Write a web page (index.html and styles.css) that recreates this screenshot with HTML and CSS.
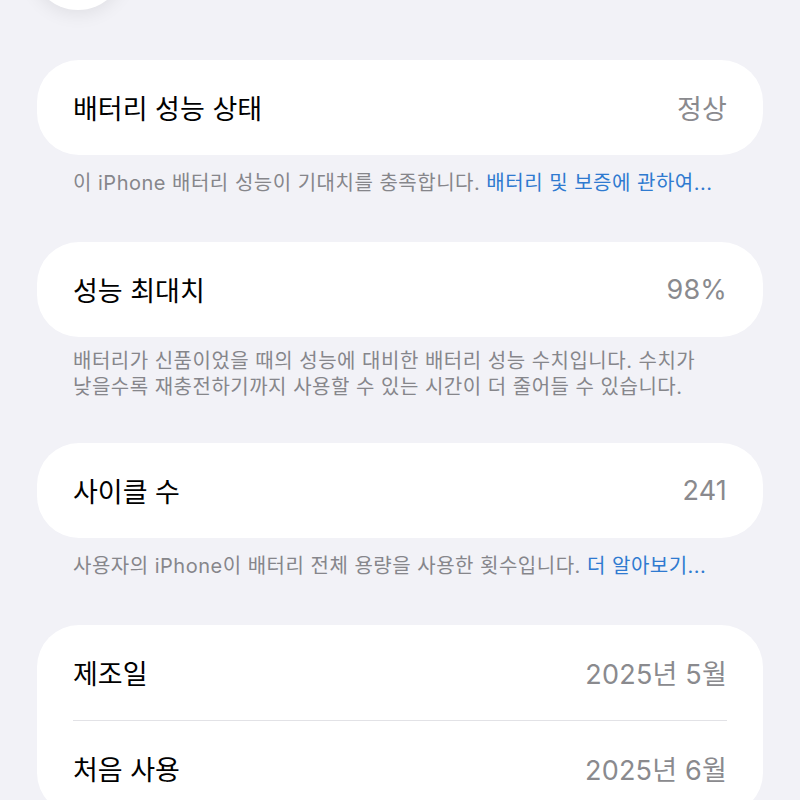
FILE: index.html
```html
<!DOCTYPE html>
<html lang="ko">
<head>
    <meta charset="UTF-8">
    <meta name="viewport" content="width=device-width, initial-scale=1.0">
    <title>배터리 성능 상태</title>
    <link rel="stylesheet" href="styles.css">
</head>
<body>

    <div class="backButton"></div>

    <main class="page">

        <section class="group">
            <div class="row">
                <span class="label">배터리 성능 상태</span>
                <span class="value">정상</span>
            </div>
        </section>
        <p class="note">이 iPhone 배터리 성능이 기대치를 충족합니다. <a class="link" href="#">배터리 및 보증에 관하여...</a></p>

        <section class="group">
            <div class="row">
                <span class="label">성능 최대치</span>
                <span class="value">98%</span>
            </div>
        </section>
        <p class="note twoLines">배터리가 신품이었을 때의 성능에 대비한 배터리 성능 수치입니다. 수치가<br>낮을수록 재충전하기까지 사용할 수 있는 시간이 더 줄어들 수 있습니다.</p>

        <section class="group">
            <div class="row">
                <span class="label">사이클 수</span>
                <span class="value">241</span>
            </div>
        </section>
        <p class="note">사용자의 iPhone이 배터리 전체 용량을 사용한 횟수입니다. <a class="link" href="#">더 알아보기...</a></p>

        <section class="group">
            <div class="row">
                <span class="label">제조일</span>
                <span class="value">2025년 5월</span>
            </div>
            <div class="row">
                <span class="label">처음 사용</span>
                <span class="value">2025년 6월</span>
            </div>
        </section>

    </main>

</body>
</html>
```

FILE: styles.css
```css
body {
    margin:             0;
    background-color:   #f2f2f7;
    font-family:        Inter, "Noto Sans CJK KR", sans-serif;
    overflow:           hidden;
}

.backButton {
    position:           absolute;
    left:               31px;
    top:                -84px;
    width:              94px;
    height:             94px;
    border-radius:      50%;
    background-color:   #ffffff;
    box-shadow:         0 4px 18px rgba(0, 0, 0, 0.08);
}

.page {
    display:            flex;
    flex-direction:     column;
    padding:            60px 37px 0 37px;
}

.group {
    background-color:   #ffffff;
    border-radius:      42px;
    padding:            0 36px;
}

.row {
    display:            flex;
    justify-content:    space-between;
    align-items:        center;
    height:             95px;
    font-size:          27px;
}

.row + .row             { border-top: 1px solid #e2e2e6; height: 94px; }

.label                  { color: #000000; }
.value                  { color: #8a8a8e; letter-spacing: 0.2px; }

.note {
    margin:             0;
    padding:            15px 36px 46px 36px;
    font-size:          20px;
    line-height:        26px;
    letter-spacing:     0.5px;
    color:              #86868b;
    white-space:        nowrap;
}

.note.twoLines          { padding-top: 11px; padding-bottom: 43px; }

.link {
    color:              #2f7ad0;
    text-decoration:    none;
}
```
